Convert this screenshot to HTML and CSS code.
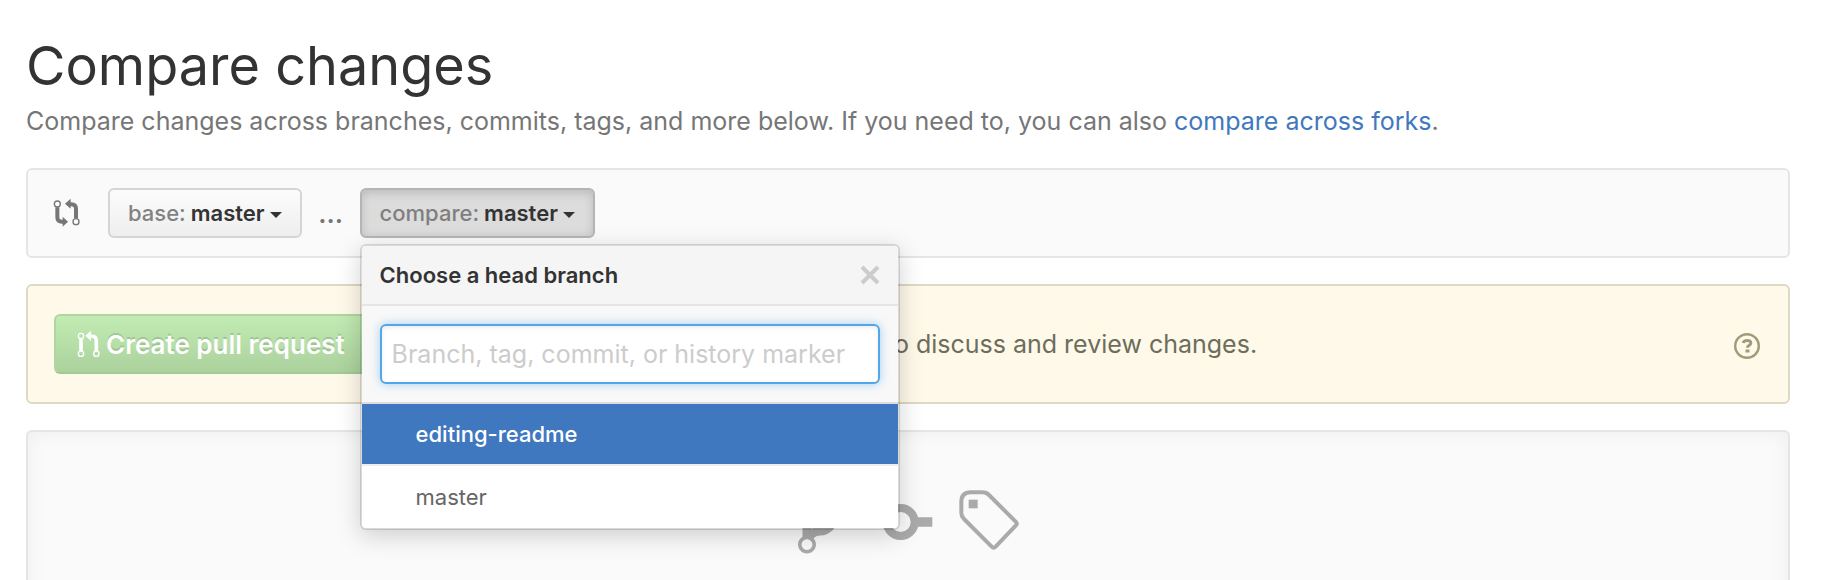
FILE: index.html
```
<!DOCTYPE html>
<html lang="en">
<head>
    <meta charset="UTF-8">
    <meta name="viewport" content="width=device-width, initial-scale=1.0">
    <title>Compare changes</title>
    <link rel="stylesheet" href="styles.css">
</head>
<body>
    <main class="page">
        <header class="page-header">
            <h1>Compare changes</h1>
            <p>Compare changes across branches, commits, tags, and more below. If you need to, you can also <a href="#">compare across forks</a>.</p>
        </header>

        <div class="range-editor">
            <svg class="compare-icon" viewBox="70 76 84 90" aria-hidden="true">
                <g fill="none" stroke="currentColor">
                    <circle cx="83" cy="94" r="9" stroke-width="4"/>
                    <circle cx="139" cy="147" r="9" stroke-width="4"/>
                    <path d="M83 104v29q0 14 14 14h6M139 137v-28q0-14-14-14h-6" stroke-width="12"/>
                </g>
                <path d="M99 132l16 15-16 15zM123 78l-17 15 17 15z" fill="currentColor"/>
            </svg>
            <button class="btn" type="button"><span class="label">base:</span> master <span class="caret"></span></button>
            <span class="dots">...</span>
            <div class="select-menu">
                <button class="btn selected" type="button"><span class="label">compare:</span> master <span class="caret"></span></button>
                <div class="menu">
                    <div class="menu-header">
                        <label for="branch">Choose a head branch</label>
                        <button class="close" type="button" aria-label="Close">
                            <svg viewBox="0 0 20 20" aria-hidden="true"><path d="M2 2l16 16M18 2L2 18" stroke="currentColor" stroke-width="4"/></svg>
                        </button>
                    </div>
                    <div class="menu-filter">
                        <input type="text" id="branch" placeholder="Branch, tag, commit, or history marker">
                    </div>
                    <a class="menu-item active" href="#">editing-readme</a>
                    <a class="menu-item" href="#">master</a>
                </div>
            </div>
        </div>

        <div class="notice">
            <button class="btn-primary" type="button">
                <svg class="pull-icon" viewBox="142 142 72 84" aria-hidden="true">
                    <g fill="none" stroke="currentColor">
                        <circle cx="154" cy="160" r="8" stroke-width="4"/>
                        <circle cx="154" cy="213" r="8" stroke-width="4"/>
                        <circle cx="200" cy="213" r="8" stroke-width="4"/>
                        <path d="M154 169v35M200 204v-29q0-15-15-15h-4" stroke-width="11"/>
                    </g>
                    <path d="M184 144l-17 15 17 16z" fill="currentColor"/>
                </svg>
                Create pull request
            </button>
            <p>Choose different branches or forks above to discuss and review changes.</p>
            <a class="help" href="#" aria-label="Help">
                <svg viewBox="0 0 26 26" aria-hidden="true">
                    <circle cx="13" cy="13" r="11.8" fill="none" stroke="currentColor" stroke-width="2.4"/>
                    <path d="M9.200 10q.6-2.600 4-2.600 3.600 0 3.600 2.600 0 1.500-1.700 2.300-1.600.7-1.600 2.500" fill="none" stroke="currentColor" stroke-width="3"/>
                    <path d="M11.500 16.500h4v3h-4z" fill="currentColor"/>
                </svg>
            </a>
        </div>

        <div class="blankslate">
            <svg class="icon-branch" viewBox="0 0 10 16" aria-hidden="true">
                <path fill-rule="evenodd" fill="currentColor" d="M10 5c0-1.110-.89-2-2-2a1.993 1.993 0 0 0-1 3.720v.3c-.02.52-.23.98-.63 1.380-.4.4-.86.61-1.380.63-.83.02-1.480.16-2 .45V4.720a1.993 1.993 0 0 0-1-3.720C.88 1 0 1.890 0 3a2 2 0 0 0 1 1.720v6.560c-.59.35-1 .99-1 1.720 0 1.110.89 2 2 2 1.110 0 2-.89 2-2 0-.53-.2-1-.53-1.360.09-.06.48-.41.59-.47.25-.11.56-.17.94-.17 1.050-.05 1.950-.45 2.750-1.250S8.950 7.770 9 6.730h-.02C9.590 6.370 10 5.730 10 5zM2 1.800c.66 0 1.200.55 1.200 1.200 0 .65-.55 1.200-1.200 1.200C1.350 4.200.8 3.650.8 3c0-.65.55-1.200 1.200-1.200zm0 12.410c-.66 0-1.200-.55-1.200-1.200 0-.65.55-1.200 1.200-1.200.65 0 1.200.55 1.200 1.200 0 .65-.55 1.200-1.200 1.200zm6-8c-.66 0-1.200-.55-1.200-1.200 0-.65.55-1.200 1.200-1.200.65 0 1.200.55 1.200 1.200 0 .65-.55 1.200-1.200 1.200z"/>
            </svg>
            <svg class="icon-commit" viewBox="290 78 192 216" aria-hidden="true">
                <circle cx="385" cy="186" r="42" fill="none" stroke="currentColor" stroke-width="24"/>
                <path d="M290 172h48v28h-48zM432 172h48v28h-48z" fill="currentColor"/>
            </svg>
            <svg class="icon-tag" viewBox="565 78 180 216" aria-hidden="true">
                <path d="M600 97h35q12 0 20 8l80 80q6 6 0 12l-60 63q-6 6-12 0l-83-83q-8-8-8-18v-33q0-29 28-29z" fill="none" stroke="currentColor" stroke-width="12"/>
                <path d="M594 119h27v26h-27z" fill="currentColor"/>
            </svg>
        </div>
    </main>
</body>
</html>
```
FILE: styles.css
```
* {
    box-sizing: border-box;
}
body {
    margin: 0;
    overflow: hidden;
    font-family: Inter, "Liberation Sans", sans-serif;
    font-size: 26px;
    color: #333;
    background: #fff;
}
a {
    color: #4078c0;
    text-decoration: none;
}
svg {
    display: block;
    flex: none;
}
.page {
    padding: 32px 46px 0 26px;
}
.page-header {
    margin-bottom: 26px;
}
h1 {
    margin: 0;
    font-size: 54px;
    font-weight: 400;
    line-height: 68px;
}
.page-header p {
    margin: 0;
    font-size: 25px;
    line-height: 42px;
    color: #767676;
    white-space: nowrap;
}
.range-editor {
    display: flex;
    align-items: center;
    height: 90px;
    padding: 0 25px;
    border: 2px solid #e5e5e5;
    border-radius: 6px;
    background: #fafafa;
}
.compare-icon {
    width: 28px;
    height: 30px;
    margin-right: 27px;
    color: #767676;
}
.btn {
    display: flex;
    align-items: center;
    gap: 5px;
    height: 50px;
    padding: 0 18px;
    border: 2px solid #d5d5d5;
    border-radius: 6px;
    background: linear-gradient(#fcfcfc, #eee);
    font-family: inherit;
    font-size: 22px;
    font-weight: 600;
    color: #333;
    white-space: nowrap;
}
.btn.selected {
    border-color: #b5b5b5;
    background: #dcdcdc;
    box-shadow: inset 0 3px 10px rgba(0, 0, 0, 0.15);
}
.btn .label {
    font-weight: 500;
    color: #767676;
    opacity: 0.9;
}
.caret {
    margin-top: 4px;
    border: 6px solid transparent;
    border-top-color: #333;
    border-bottom: 0;
}
.dots {
    width: 58px;
    text-align: center;
    font-weight: 600;
    color: #767676;
}
.select-menu {
    position: relative;
}
.menu {
    position: absolute;
    top: 56px;
    left: 0;
    z-index: 10;
    width: 540px;
    overflow: hidden;
    border: 2px solid rgba(0, 0, 0, 0.13);
    border-radius: 6px;
    background: #fff;
    background-clip: padding-box;
    box-shadow: 0 6px 24px rgba(0, 0, 0, 0.175);
}
.menu-header {
    display: flex;
    align-items: center;
    justify-content: space-between;
    height: 60px;
    padding: 0 18px;
    border-bottom: 2px solid #e5e5e5;
    background: #f5f5f5;
    font-size: 22px;
    font-weight: 600;
}
.close {
    padding: 0;
    border: 0;
    background: none;
    color: #ccc;
}
.close svg {
    width: 20px;
    height: 20px;
}
.menu-filter {
    padding: 18px;
    border-bottom: 2px solid #ddd;
    background: #f8f8f8;
}
.menu-filter input {
    display: block;
    width: 100%;
    height: 60px;
    padding: 0 10px;
    border: 2px solid #51a7e8;
    border-radius: 6px;
    outline: none;
    background: #fff;
    box-shadow: inset 0 2px 4px rgba(0, 0, 0, 0.075), 0 0 10px rgba(81, 167, 232, 0.5);
    font-family: inherit;
    font-size: 25px;
}
.menu-filter input::placeholder {
    color: #ccc;
}
.menu-item {
    display: block;
    padding: 0 54px;
    font-size: 22px;
    line-height: 62px;
    color: #666;
}
.menu-item.active {
    border-bottom: 2px solid #eee;
    line-height: 60px;
    background: #4078c0;
    font-weight: 500;
    color: #fff;
}
.notice {
    display: flex;
    align-items: center;
    height: 120px;
    margin: 26px 0;
    padding: 0 28px 0 26px;
    border: 2px solid #dfd8c2;
    border-radius: 6px;
    background: #fff9ea;
    white-space: nowrap;
}
.btn-primary {
    display: flex;
    align-items: center;
    gap: 5px;
    height: 60px;
    padding: 0 22px 0 21px;
    border: 2px solid #b0d6a1;
    border-bottom-color: #a2ca94;
    border-radius: 6px;
    background: linear-gradient(#c2ecb3, #abd19d);
    font-family: inherit;
    font-size: 26px;
    font-weight: 600;
    color: #fff;
    text-shadow: 0 -2px 0 rgba(0, 0, 0, 0.15);
}
.pull-icon {
    width: 24px;
    height: 28px;
}
.notice p {
    margin: 0 0 0 18px;
    font-size: 25px;
    color: #6d6d5c;
}
.help {
    margin: 4px 0 0 auto;
    color: #a19b7a;
}
.help svg {
    width: 26px;
    height: 26px;
}
.blankslate {
    display: flex;
    justify-content: center;
    gap: 26px;
    padding: 54px 0 60px;
    border: 2px solid #e5e5e5;
    border-radius: 6px;
    background: #fafafa;
    box-shadow: inset 0 0 20px rgba(0, 0, 0, 0.05);
    color: #aaa;
}
.icon-branch {
    width: 45px;
    height: 72px;
}
.icon-commit {
    width: 64px;
    height: 72px;
}
.icon-tag {
    width: 60px;
    height: 72px;
}
```
